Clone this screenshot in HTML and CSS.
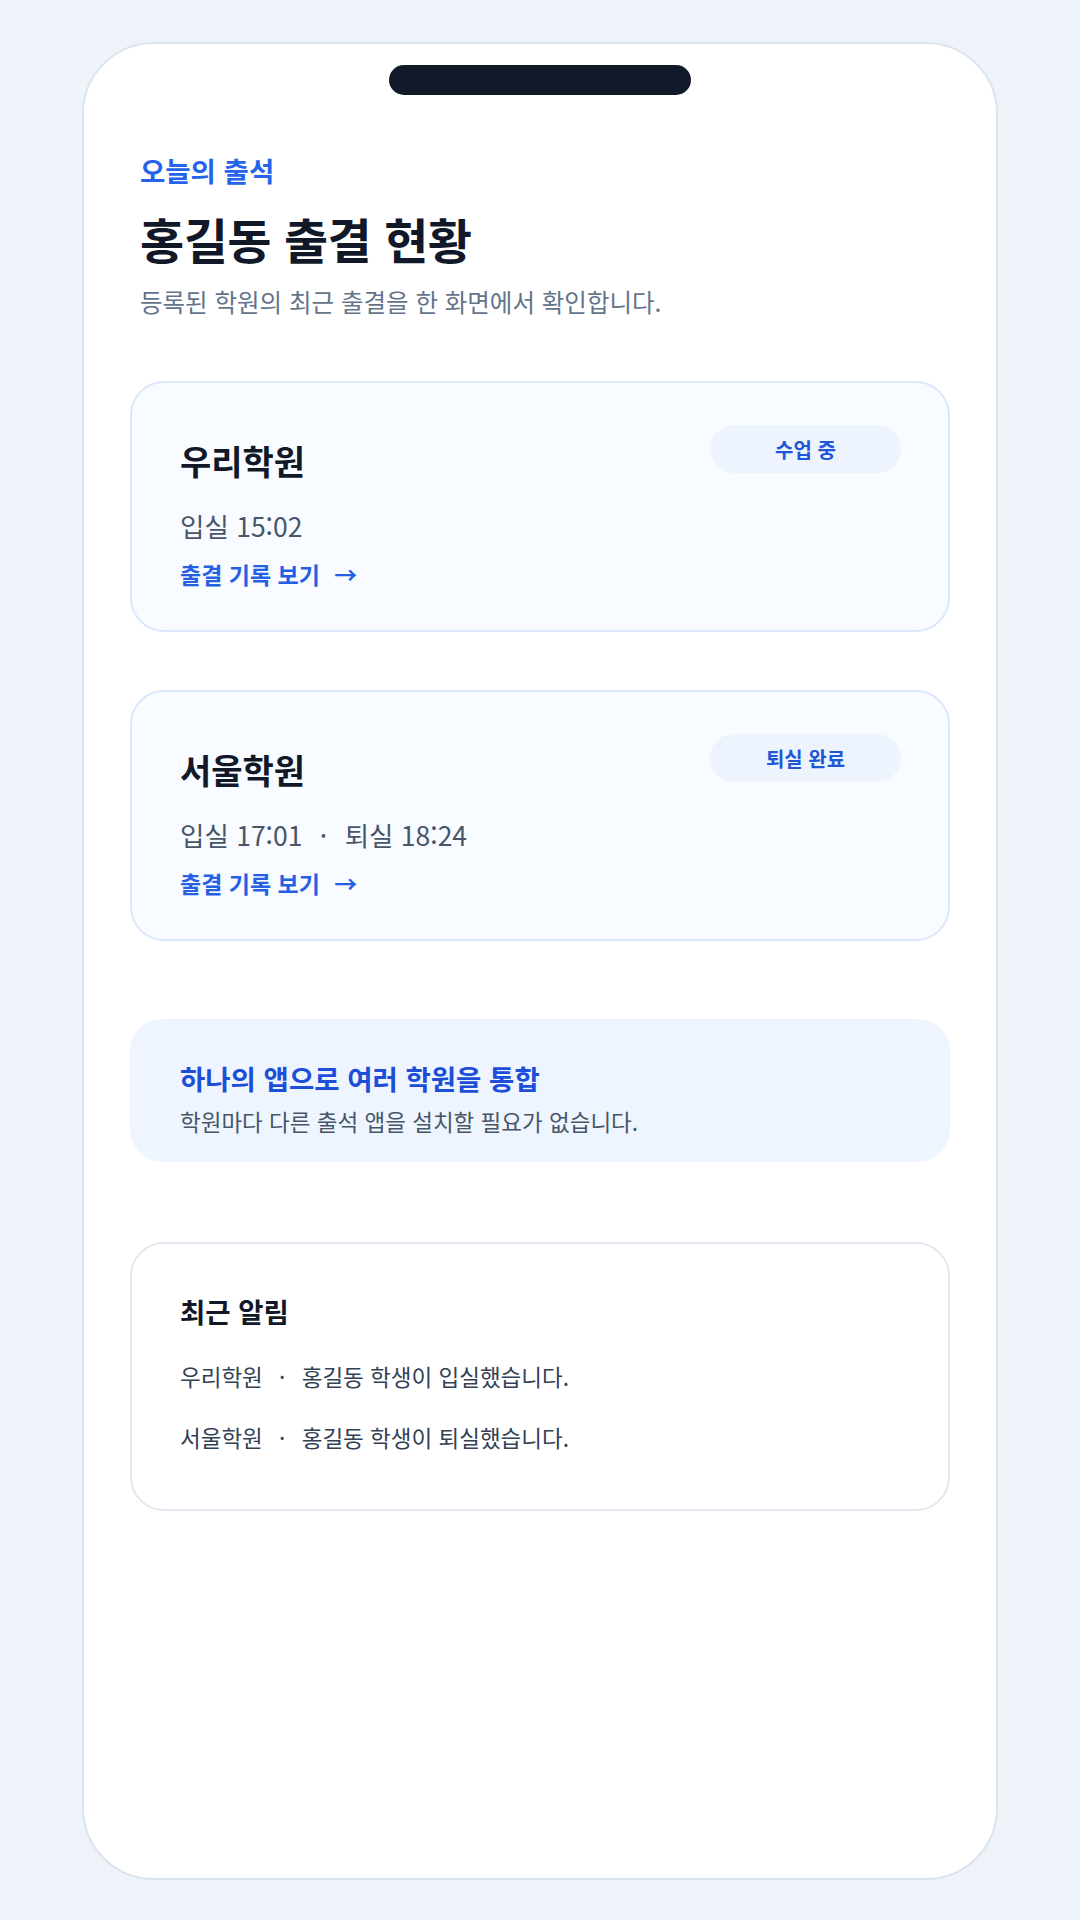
FILE: index.html
```html
<!DOCTYPE html>
<html lang="ko">
<head>
<meta charset="utf-8">
<link rel="stylesheet" href="styles.css">
</head>
<body>
<div class="phone">
  <div class="notch"></div>
  <div class="content">
    <header class="hero">
      <div class="eyebrow">오늘의 출석</div>
      <h1 class="title">홍길동 출결 현황</h1>
      <p class="subtitle">등록된 학원의 최근 출결을 한 화면에서 확인합니다.</p>
    </header>

    <section class="card">
      <div class="card-head">
        <h2 class="card-title">우리학원</h2>
        <span class="badge">수업 중</span>
      </div>
      <p class="times">입실 15:02</p>
      <a class="link">출결 기록 보기 <span class="arrow">→</span></a>
    </section>

    <section class="card">
      <div class="card-head">
        <h2 class="card-title">서울학원</h2>
        <span class="badge">퇴실 완료</span>
      </div>
      <p class="times">입실 17:01 <span class="dot">·</span> 퇴실 18:24</p>
      <a class="link">출결 기록 보기 <span class="arrow">→</span></a>
    </section>

    <section class="info">
      <h3 class="info-title">하나의 앱으로 여러 학원을 통합</h3>
      <p class="info-text">학원마다 다른 출석 앱을 설치할 필요가 없습니다.</p>
    </section>

    <section class="alerts">
      <h3 class="alerts-title">최근 알림</h3>
      <p class="alert">우리학원 <span class="dot">·</span> 홍길동 학생이 입실했습니다.</p>
      <p class="alert">서울학원 <span class="dot">·</span> 홍길동 학생이 퇴실했습니다.</p>
    </section>
  </div>
</div>
</body>
</html>
```

FILE: styles.css
```css
* { box-sizing: border-box; margin: 0; padding: 0; }

html, body {
  width: 1080px;
  height: 1920px;
}

body {
  background: #eef2f9;
  font-family: "Noto Sans CJK KR", "Noto Sans", sans-serif;
  color: #111827;
  overflow: hidden;
}

.phone {
  width: 916px;
  height: 1838px;
  margin: 42px auto 0;
  background: #ffffff;
  border: 2px solid #dce4ef;
  border-radius: 72px;
  display: flex;
  flex-direction: column;
  align-items: center;
}

.notch {
  width: 302px;
  height: 30px;
  margin-top: 21px;
  background: #111827;
  border-radius: 15px;
  flex: none;
}

.content {
  width: 100%;
  padding: 0 46px;
  display: flex;
  flex-direction: column;
}

.hero {
  padding: 56px 10px 0;
  display: flex;
  flex-direction: column;
}

.eyebrow {
  font-size: 27.5px;
  line-height: 38px;
  font-weight: 700;
  color: #2563eb;
}

.title {
  margin-top: 18px;
  font-size: 48px;
  line-height: 62px;
  font-weight: 700;
  color: #111827;
  letter-spacing: -0.5px;
}

.subtitle {
  margin-top: 16px;
  font-size: 24.5px;
  line-height: 34px;
  font-weight: 400;
  color: #64748b;
}

.card {
  margin-top: 58px;
  background: #f8fbff;
  border: 2px solid #dbe8fb;
  border-radius: 34px;
  padding: 42px 47px 40px 48px;
  display: flex;
  flex-direction: column;
}

.hero + .card { margin-top: 62px; }

.card-head {
  display: flex;
  justify-content: space-between;
  align-items: flex-start;
}

.card-title {
  margin-top: 13px;
  font-size: 34px;
  line-height: 46px;
  font-weight: 700;
  color: #111827;
}

.badge {
  width: 191px;
  height: 48px;
  border-radius: 24px;
  background: #eef4fe;
  color: #1f57d8;
  font-size: 20px;
  font-weight: 700;
  display: flex;
  align-items: center;
  justify-content: center;
}

.times {
  margin-top: 24px;
  font-size: 26.5px;
  line-height: 36px;
  color: #475569;
}

.dot {
  margin: 0 10px;
}

.link {
  margin-top: 14px;
  font-size: 23px;
  line-height: 32px;
  font-weight: 700;
  color: #2560e4;
}

.arrow {
  margin-left: 8px;
}

.info {
  margin-top: 78px;
  background: #eff5ff;
  border-radius: 32px;
  padding: 41px 50px 25px;
  display: flex;
  flex-direction: column;
}

.info-title {
  font-size: 27.5px;
  line-height: 36px;
  font-weight: 700;
  color: #1d4ed8;
}

.info-text {
  margin-top: 9px;
  font-size: 22.5px;
  line-height: 32px;
  color: #475569;
}

.alerts {
  margin-top: 80px;
  background: #ffffff;
  border: 2px solid #e2e8f0;
  border-radius: 34px;
  padding: 48px 48px 55px;
  display: flex;
  flex-direction: column;
}

.alerts-title {
  font-size: 27.5px;
  line-height: 38px;
  font-weight: 700;
  color: #111827;
}

.alert {
  margin-top: 29px;
  font-size: 22.5px;
  line-height: 34px;
  color: #334155;
}

.alert + .alert { margin-top: 27px; }
```
